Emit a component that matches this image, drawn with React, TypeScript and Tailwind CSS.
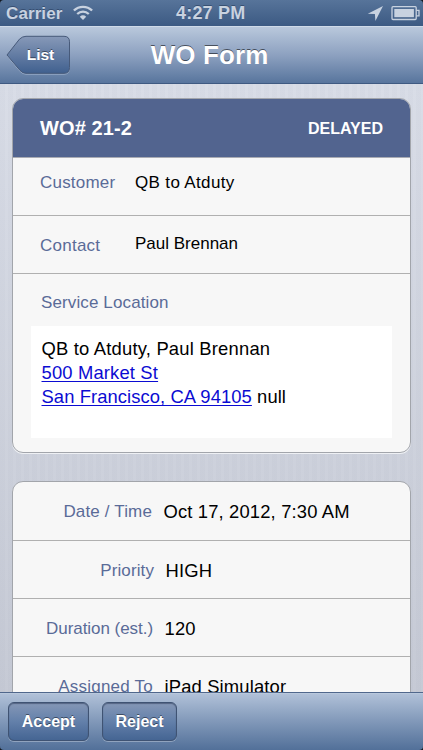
import React from "react";

const buttonFace =
  "flex items-center justify-center rounded-[6px] border border-[#3f5373] bg-gradient-to-b from-[#8597b6] via-[#6380aa] to-[#456593] text-[16px] font-bold text-white shadow-[inset_0_1px_1px_rgba(45,60,90,0.55),0_1px_0_rgba(255,255,255,0.3)] [text-shadow:0_-1px_0_rgba(0,0,0,0.45)]";

function StatusBar() {
  return (
    <header className="flex h-[26px] shrink-0 items-center rounded-t-[4px] bg-gradient-to-b from-[#57749a] to-[#3c5a83] pl-[6px] pr-[3px] text-[#c8d2e0]">
      <div className="flex w-[170px] items-center">
        <span className="pt-[2px] text-[17px] font-bold leading-[24px] tracking-[0.1px] [text-shadow:0_-1px_0_rgba(30,50,80,0.5)]">Carrier</span>
        <svg className="ml-[11px]" width="20" height="16" viewBox="0 0 20 16" fill="none" stroke="#c8d2e0">
          <path d="M0.9 5.5C6 .6 14 .6 19.1 5.5" strokeWidth="2.4" />
          <path d="M4.2 9C7.6 5.8 12.4 5.8 15.8 9" strokeWidth="2.3" />
          <path d="M10 15L6.8 11.7Q10 8.9 13.2 11.7Z" fill="#c8d2e0" stroke="none" />
        </svg>
      </div>
      <span className="text-[18px] font-bold leading-[26px] tracking-[0.2px] [text-shadow:0_-1px_0_rgba(30,50,80,0.5)]">4:27 PM</span>
      <div className="flex flex-1 items-center justify-end">
        <svg width="17" height="17" viewBox="0 0 17 17" fill="#c8d2e0">
          <path d="M16 .9L.8 8.8L7.9 9.1L8.4 16Z" />
        </svg>
        <svg className="ml-[7px]" width="29" height="16" viewBox="0 0 29 16" fill="none" stroke="#c8d2e0">
          <rect x="1" y="1.7" width="24.2" height="12.8" rx="1" strokeWidth="1.3" />
          <rect x="3.3" y="4" width="19.6" height="8.2" fill="#c8d2e0" stroke="none" />
          <path d="M25.3 5.4H28V10.8H25.3" strokeWidth="1.3" />
        </svg>
      </div>
    </header>
  );
}

function NavBar() {
  return (
    <nav className="grid h-[58px] shrink-0 grid-cols-[71px_1fr_75px] items-start border-t border-b border-t-[#cfdae8] border-b-[#3f5a82] bg-gradient-to-b from-[#b9c8dc] via-[#8da1c0] to-[#58759d]">
      <button className="relative mt-[8px] ml-[6px] h-[40px] w-[65px] text-[15.5px] font-bold text-white">
        <svg className="absolute inset-0" width="65" height="40" viewBox="0 0 65 40">
          <defs>
            <linearGradient id="back" x1="0" y1="0" x2="0" y2="1">
              <stop offset="0" stopColor="#8799b8" />
              <stop offset="1" stopColor="#40608f" />
            </linearGradient>
          </defs>
          <path d="M1.4 21L14 5.1Q16.6 2.2 20 2.2H58Q63.5 2.2 63.5 8V33Q63.5 39.2 58 39.2H20Q17 39.2 14.2 36.5Z" fill="none" stroke="#b9c8dc" strokeOpacity=".6" />
          <path d="M1 20L13.5 4.1Q16.5 1.3 20 1.3H58Q63.5 1.3 63.5 6.8V32.6Q63.5 38.3 58 38.3H20Q16.5 38.3 14 35.4Z" fill="url(#back)" stroke="#475a7a" />
        </svg>
        <span className="relative block pl-[4px] leading-[38px] [text-shadow:0_-1px_0_rgba(0,0,0,0.45)]">List</span>
      </button>
      <h1 className="whitespace-nowrap text-center text-[26px] font-bold leading-[57px] tracking-[0.1px] text-white [text-shadow:0_-1px_0_rgba(0,0,0,0.55)]">WO Form</h1>
    </nav>
  );
}

const cardEdge = "shrink-0 overflow-hidden border border-[#a2a5ab] bg-[#f7f7f7] shadow-[0_1px_0_#eef0f4]";

function WorkOrder() {
  return (
    <section className={`${cardEdge} h-[355px] rounded-[11px]`}>
      <div className="flex h-[59px] items-center justify-between border-b border-[#a9abb3] bg-[#52648f] pl-[27px] pr-[27px] text-white">
        <h2 className="text-[20px] font-bold leading-[24px] tracking-[0.1px]">WO# 21-2</h2>
        <strong className="pt-[1px] text-[16px] leading-[20px]">DELAYED</strong>
      </div>
      <div className="flex h-[58px] items-start border-b border-[#b0b0b0] pl-[27px] pt-[14px] text-[17px] leading-[22px]">
        <span className="w-[95px] tracking-[0.2px] text-[#5a6b98]">Customer</span>
        <span className="tracking-[0.35px]">QB to Atduty</span>
      </div>
      <div className="flex h-[58px] items-start border-b border-[#b0b0b0] pl-[27px] pt-[17px] text-[17px] leading-[22px]">
        <span className="w-[95px] pt-[2px] tracking-[0.25px] text-[#5a6b98]">Contact</span>
        <span>Paul Brennan</span>
      </div>
      <div className="px-[18px] pt-[18px]">
        <h3 className="pl-[10px] text-[17px] leading-[22px] tracking-[0.12px] text-[#5a6b98]">Service Location</h3>
        <address className="mt-[12px] h-[112px] bg-white pl-[10.5px] pt-[11px] text-[18.4px] not-italic leading-[24px] tracking-[0.16px]">
          <p className="tracking-[0.2px]">QB to Atduty, Paul Brennan</p>
          <p><a className="text-[#0b0bd2] underline decoration-1 underline-offset-2" href="#">500 Market St</a></p>
          <p className="tracking-[0.08px]"><a className="text-[#0b0bd2] underline decoration-1 underline-offset-2" href="#">San Francisco, CA 94105</a> null</p>
        </address>
      </div>
    </section>
  );
}

type FieldProps = { label: string; value: string; labelClass: string; first?: boolean };

function Field({ label, value, labelClass, first }: FieldProps) {
  return (
    <div className={`flex ${first ? "h-[59px]" : "h-[58px]"} shrink-0 border-b border-[#b0b0b0] pt-[18px] leading-[23px]`}>
      <span className={`${labelClass} text-right text-[17px] text-[#5a6b98]`}>{label}</span>
      <span className="pl-[11.5px] text-[18.4px] tracking-[0.15px]">{value}</span>
    </div>
  );
}

export default function App() {
  return (
    <div className="bg-[#121820]">
      <div className="flex h-[750px] w-[423px] flex-col overflow-hidden font-['Liberation_Sans',Arial,sans-serif] text-black">
        <StatusBar />
        <NavBar />
        <main className="flex min-h-0 flex-1 flex-col overflow-hidden bg-[repeating-linear-gradient(90deg,rgba(80,90,120,0.025)_0px,rgba(80,90,120,0.025)_5px,transparent_5px,transparent_8px),linear-gradient(#d9dde7,#c6cad5)] pl-[12px] pr-[12px] pt-[14px]">
          <WorkOrder />
          <section className={`${cardEdge} mt-[28px] h-[240px] rounded-t-[11px]`}>
            <Field label="Date / Time" value="Oct 17, 2012, 7:30 AM" labelClass="w-[139px] tracking-[0.15px]" first />
            <Field label="Priority" value="HIGH" labelClass="w-[141px] tracking-[0.1px]" />
            <Field label="Duration (est.)" value="120" labelClass="w-[140px] tracking-[-0.05px]" />
            <Field label="Assigned To" value="iPad Simulator" labelClass="w-[140px] tracking-[0.22px]" />
          </section>
        </main>
        <footer className="z-10 flex h-[58px] shrink-0 items-start gap-[13px] rounded-b-[4px] border-t border-[#50678c] bg-gradient-to-b from-[#b2c2d9] to-[#527099] pl-[8px] pt-[9px] shadow-[inset_0_1px_0_#b9c8dc]">
          <button className={`${buttonFace} h-[39px] w-[81px]`}>Accept</button>
          <button className={`${buttonFace} h-[39px] w-[75px]`}>Reject</button>
        </footer>
      </div>
    </div>
  );
}
